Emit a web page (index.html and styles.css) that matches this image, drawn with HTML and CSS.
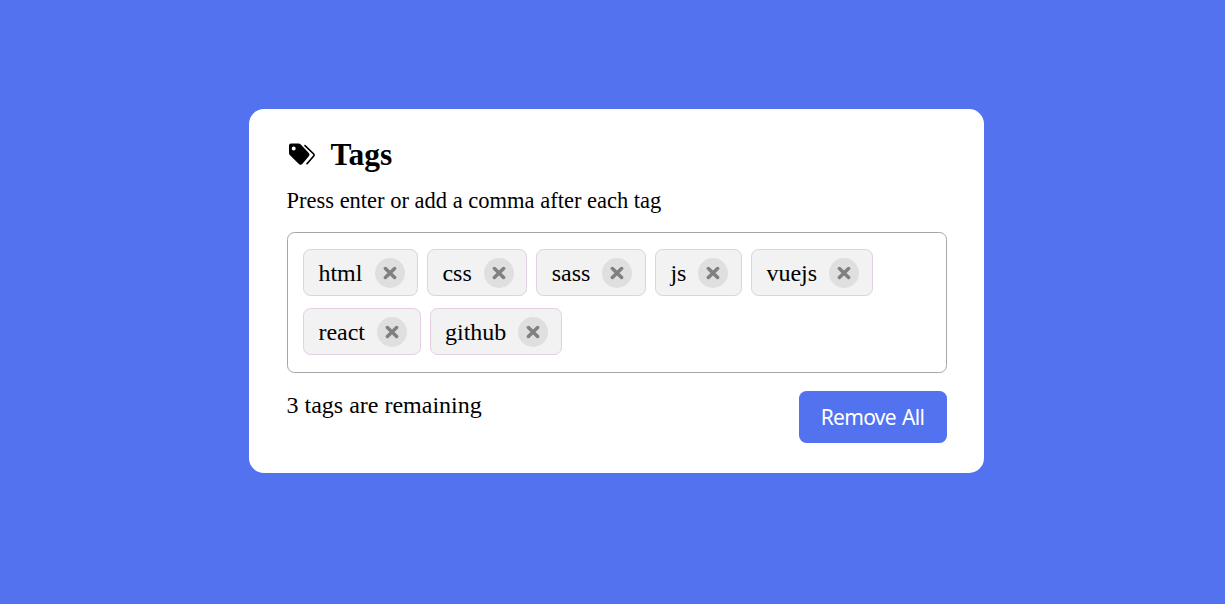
FILE: index.html
```html
<!DOCTYPE html>
<html lang="en">
<head>
<meta charset="utf-8">
<title>Tags</title>
<link rel="stylesheet" href="styles.css">
</head>
<body>
<svg class="sprite" aria-hidden="true">
  <symbol id="times" viewBox="0 0 14 14"><path d="M2.4 2.5 11.6 11.5M11.6 2.5 2.4 11.5" fill="none" stroke="currentColor" stroke-width="3.5" stroke-linecap="round"/></symbol>
</svg>
<main class="card">
  <header class="title">
    <svg class="title-icon" viewBox="0 0 28 24">
      <path fill-rule="evenodd" d="M3 .6H10.3Q11.8 .6 12.8 1.6L20.8 9.9Q22.4 11.6 20.8 13.3L14.5 20.8Q12.7 22.7 10.9 20.9L2 12.3Q1 11.3 1 10V2.6Q1 .6 3 .6ZM5.7 3.5A2 2 0 1 0 5.7 7.5A2 2 0 1 0 5.7 3.5Z"/>
      <path d="M17 2.6 25.7 11Q26.6 12 25.7 13L19 20.7" fill="none" stroke="#000" stroke-width="1.7" stroke-linecap="round"/>
    </svg>
    <h2 class="heading">Tags</h2>
  </header>
  <p class="hint">Press enter or add a comma after each tag</p>
  <ul class="tags">
    <li class="tag"><span class="label">html</span><button class="remove" aria-label="Remove html"><svg class="times"><use href="#times"/></svg></button></li>
    <li class="tag"><span class="label">css</span><button class="remove" aria-label="Remove css"><svg class="times"><use href="#times"/></svg></button></li>
    <li class="tag"><span class="label">sass</span><button class="remove" aria-label="Remove sass"><svg class="times"><use href="#times"/></svg></button></li>
    <li class="tag"><span class="label">js</span><button class="remove" aria-label="Remove js"><svg class="times"><use href="#times"/></svg></button></li>
    <li class="tag"><span class="label">vuejs</span><button class="remove" aria-label="Remove vuejs"><svg class="times"><use href="#times"/></svg></button></li>
    <li class="tag"><span class="label">react</span><button class="remove" aria-label="Remove react"><svg class="times"><use href="#times"/></svg></button></li>
    <li class="tag"><span class="label">github</span><button class="remove" aria-label="Remove github"><svg class="times"><use href="#times"/></svg></button></li>
  </ul>
  <footer class="details">
    <p class="count">3 tags are remaining</p>
    <button class="clear">Remove All</button>
  </footer>
</main>
</body>
</html>
```
FILE: styles.css
```css
* { box-sizing: border-box; margin: 0; padding: 0; }
body {
  height: 604px;
  padding: 109px 0 0 249px;
  background: #5372f0;
  color: #000;
  font-family: "Liberation Serif", serif;
}
.sprite { position: absolute; width: 0; height: 0; }
.card {
  width: 735px;
  height: 364px;
  padding: 27px 37px 30px 38px;
  border-radius: 15px;
  background: #fff;
}
.title { display: flex; align-items: center; height: 38px; }
.title-icon { width: 28px; height: 24px; margin: 0 14.5px 1px 1px; }
.heading { font-size: 31.5px; line-height: 38px; }
.hint { margin: 14px 0 0 -0.5px; font-size: 22.5px; line-height: 26px; white-space: nowrap; }
.tags {
  display: flex;
  flex-wrap: wrap;
  align-content: flex-start;
  gap: 12px 9px;
  height: 141px;
  margin-top: 18px;
  padding: 16px 15px;
  border: 1px solid #a6a6a6;
  border-radius: 7.5px;
  list-style: none;
}
.tag {
  display: flex;
  align-items: center;
  height: 47px;
  padding: 0 12.5px 0 14.4px;
  border: 1px solid #e3cfe1;
  border-radius: 7.5px;
  background: #f2f2f2;
  font-size: 24px;
}
.label { padding-top: 2px; }
.remove {
  display: flex;
  align-items: center;
  justify-content: center;
  width: 30px;
  height: 30px;
  margin-left: 12.1px;
  border: 0;
  border-radius: 50%;
  background: #dfdfdf;
  color: #808080;
}
.times { width: 14px; height: 14px; }
.details { display: flex; justify-content: space-between; margin-top: 18px; }
.count { margin-left: -0.5px; font-size: 24px; line-height: 28px; }
.clear {
  width: 148px;
  height: 52px;
  padding: 0 1px 1px 0;
  border: 0;
  border-radius: 7.5px;
  background: #5372f0;
  color: #fff;
  font: 21px "Noto Sans", sans-serif;
  letter-spacing: -0.7px;
  word-spacing: 1.5px;
}
```
